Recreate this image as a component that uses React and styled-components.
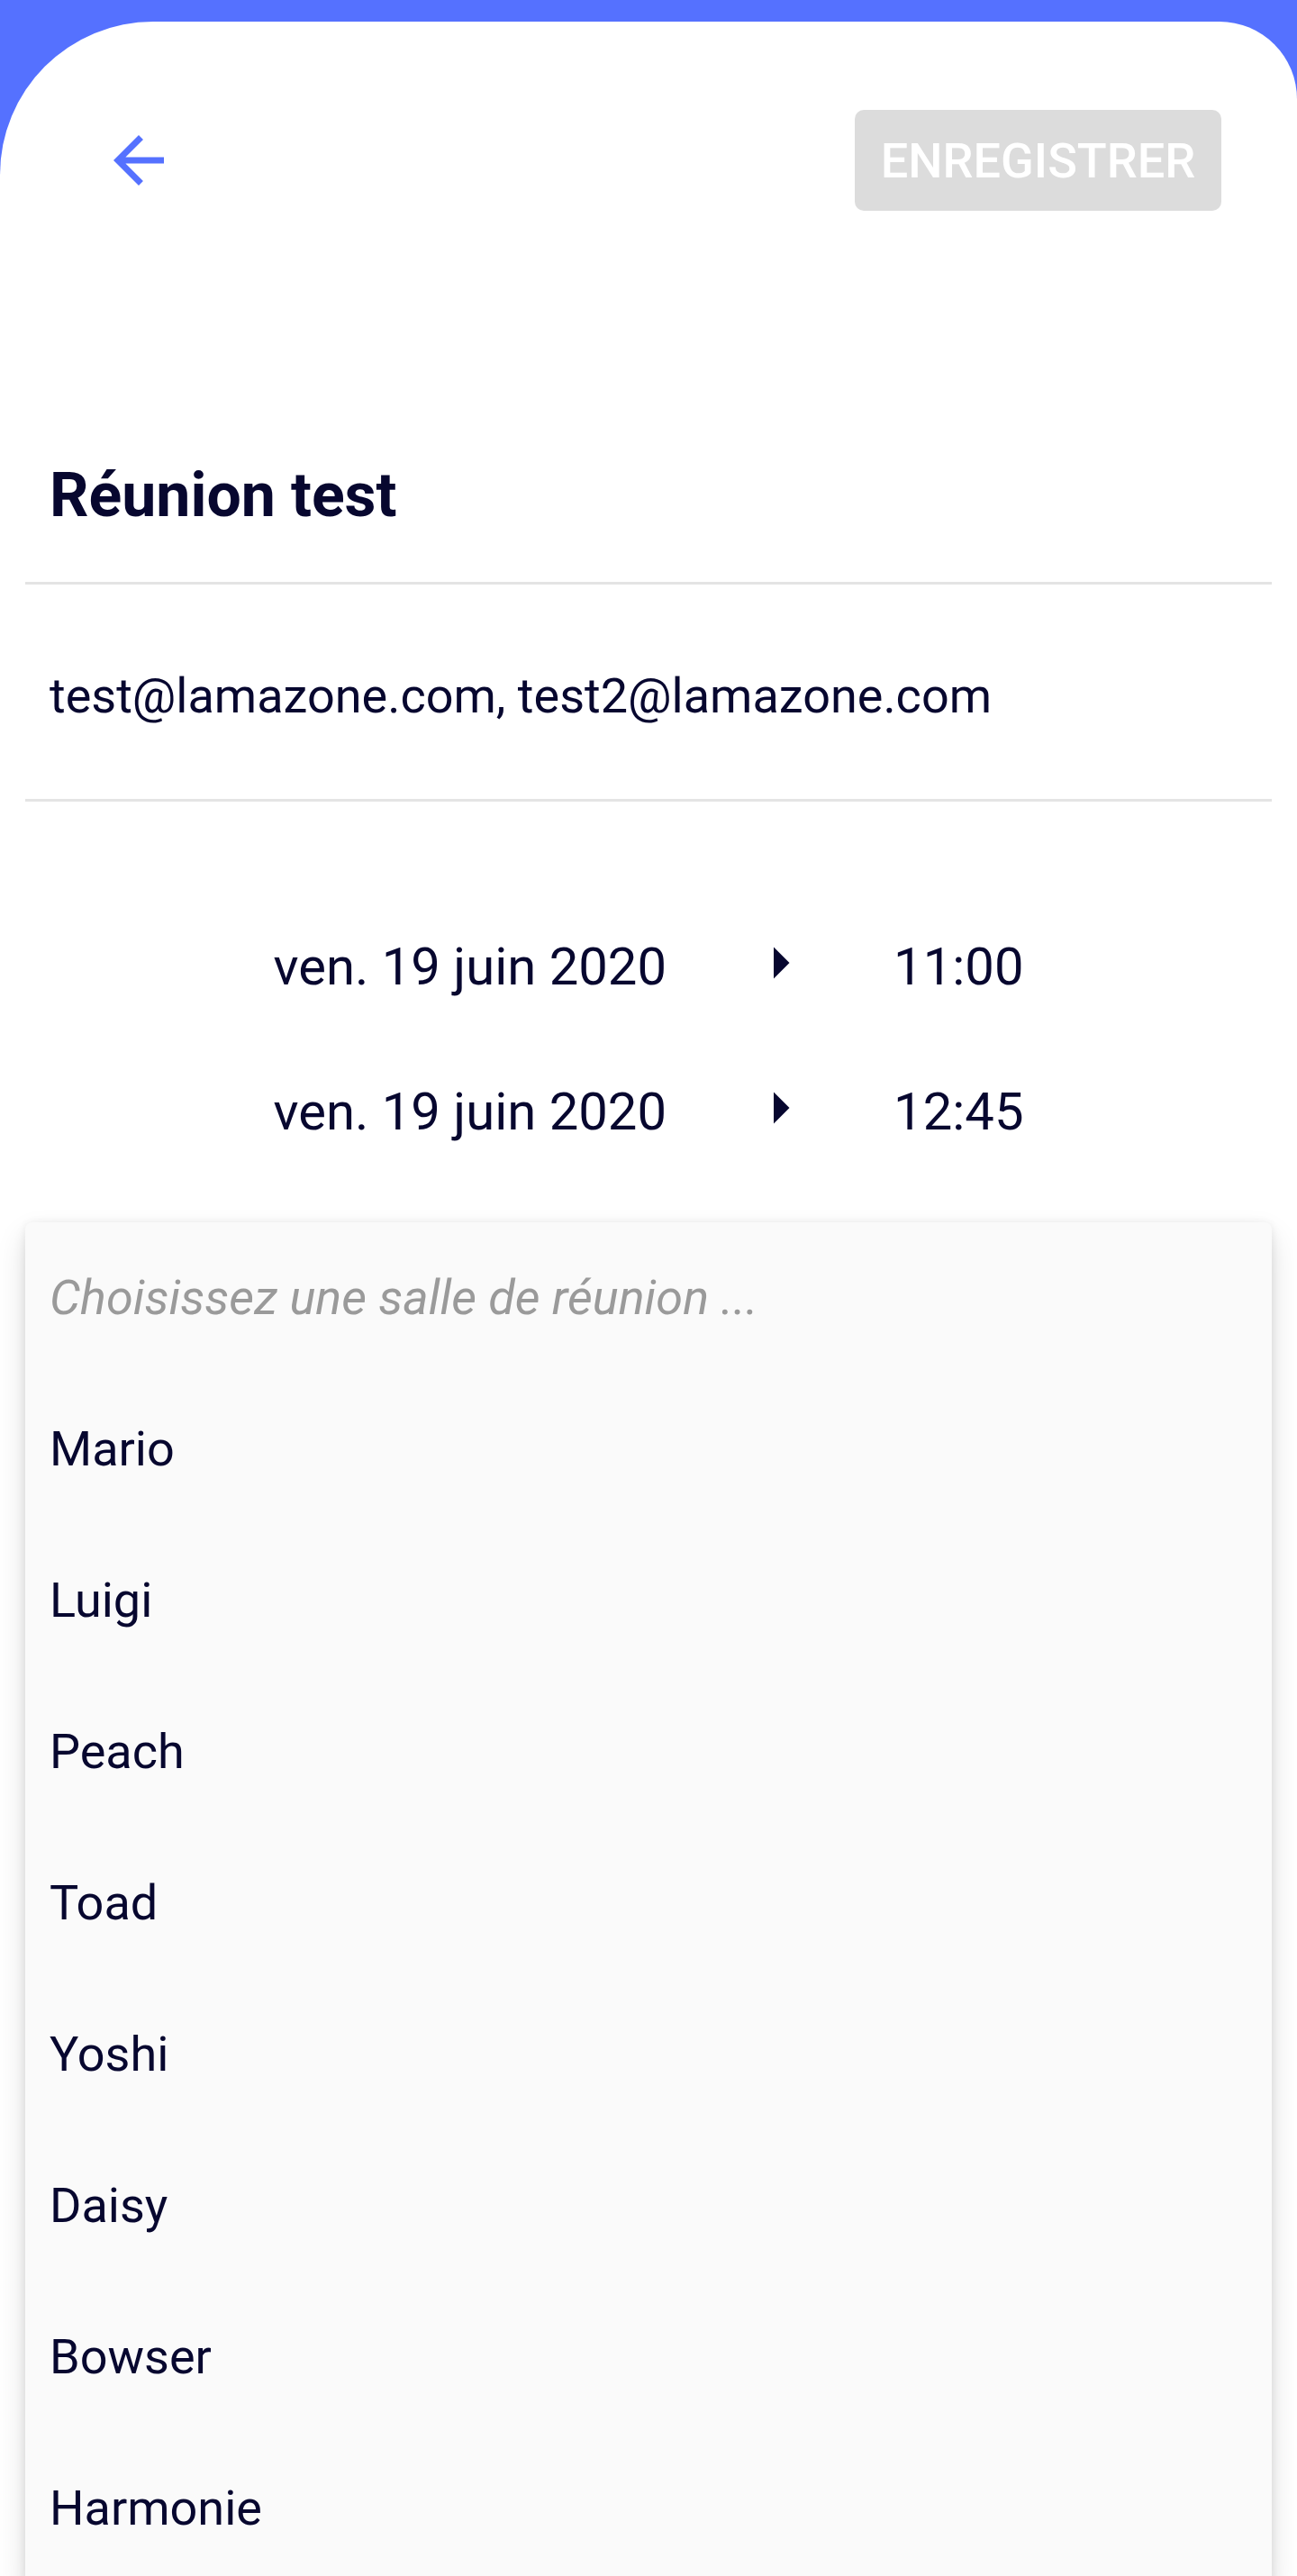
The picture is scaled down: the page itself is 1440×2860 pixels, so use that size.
import React from "react";
import styled, { createGlobalStyle } from "styled-components";

const Global = createGlobalStyle`
  html, body {
    margin: 0;
    padding: 0;
    background: #5571ff;
    font-family: Roboto, "Noto Sans", "Liberation Sans", sans-serif;
    overflow: hidden;
  }
  * { box-sizing: border-box; }
`;

const Sheet = styled.div`
  margin-top: 24px;
  min-height: 2836px;
  background: #ffffff;
  border-radius: 170px 86px 0 0;
  display: flex;
  flex-direction: column;
`;

const Header = styled.header`
  display: flex;
  align-items: center;
  justify-content: space-between;
  padding: 98px 84px 0 112px;
  height: 210px;
`;

const IconButton = styled.button`
  width: 84px;
  height: 84px;
  padding: 0;
  border: 0;
  background: transparent;
  display: flex;
  align-items: center;
  justify-content: center;
  color: #5571ff;
`;

const SaveButton = styled.button`
  width: 407px;
  height: 112px;
  border: 0;
  border-radius: 10px;
  background: #dcdcdc;
  color: #ffffff;
  font-family: Roboto, "Noto Sans", sans-serif;
  font-weight: 500;
  font-size: 54px;
  text-transform: uppercase;
  letter-spacing: 0;
  padding: 0;
`;

const Title = styled.h1`
  margin: 0;
  padding: 279px 55px 59px;
  font-family: Roboto, sans-serif;
  font-weight: 700;
  font-size: 68px;
  line-height: 74px;
  color: #07072f;
`;

const Divider = styled.hr`
  margin: 0 28px;
  border: 0;
  height: 3px;
  background: #e4e4e4;
`;

const Field = styled.div`
  padding: 91px 55px 81px;
  font-size: 54px;
  line-height: 66px;
  color: #07072f;
`;

const Dates = styled.div`
  padding: 102px 0 43px;
  display: flex;
  flex-direction: column;
`;

const DateRow = styled.div`
  height: 161px;
  display: flex;
  align-items: center;
  justify-content: center;
  gap: 84px;
  font-size: 58px;
  line-height: 66px;
  color: #07072f;
`;

const Arrow = styled.span`
  width: 84px;
  height: 84px;
  display: flex;
  color: #07072f;
  margin-top: -8px;
`;

const Menu = styled.ul`
  list-style: none;
  margin: 0 28px;
  padding: 0;
  background: #fafafa;
  border-radius: 8px;
  box-shadow: 0 16px 34px rgba(0, 0, 0, 0.12), 0 6px 14px rgba(0, 0, 0, 0.08),
    0 -2px 10px rgba(0, 0, 0, 0.03);
  flex: 1;
`;

const Option = styled.li`
  height: 168px;
  display: flex;
  align-items: center;
  padding-left: 27px;
  font-size: 54px;
  line-height: 66px;
  color: ${(p) => (p.$placeholder ? "#9a9a9a" : "#07072f")};
  font-style: ${(p) => (p.$placeholder ? "italic" : "normal")};
`;

const rooms = ["Mario", "Luigi", "Peach", "Toad", "Yoshi", "Daisy", "Bowser", "Harmonie"];

const ArrowRight = () => (
  <svg width="84" height="84" viewBox="0 0 24 24" fill="currentColor">
    <path d="M10 17l5-5-5-5v10z" />
  </svg>
);

export default function App() {
  return (
    <>
      <Global />
      <Sheet>
        <Header>
          <IconButton aria-label="Retour">
            <svg width="84" height="84" viewBox="0 0 24 24" fill="currentColor">
              <path d="M20 11H7.83l5.59-5.59L12 4l-8 8 8 8 1.41-1.41L7.83 13H20v-2z" />
            </svg>
          </IconButton>
          <SaveButton disabled>Enregistrer</SaveButton>
        </Header>
        <Title>Réunion test</Title>
        <Divider />
        <Field>test@lamazone.com, test2@lamazone.com</Field>
        <Divider />
        <Dates>
          <DateRow>
            <span>ven. 19 juin 2020</span>
            <Arrow><ArrowRight /></Arrow>
            <span>11:00</span>
          </DateRow>
          <DateRow>
            <span>ven. 19 juin 2020</span>
            <Arrow><ArrowRight /></Arrow>
            <span>12:45</span>
          </DateRow>
        </Dates>
        <Menu>
          <Option $placeholder>Choisissez une salle de réunion ...</Option>
          {rooms.map((r) => (
            <Option key={r}>{r}</Option>
          ))}
        </Menu>
      </Sheet>
    </>
  );
}
